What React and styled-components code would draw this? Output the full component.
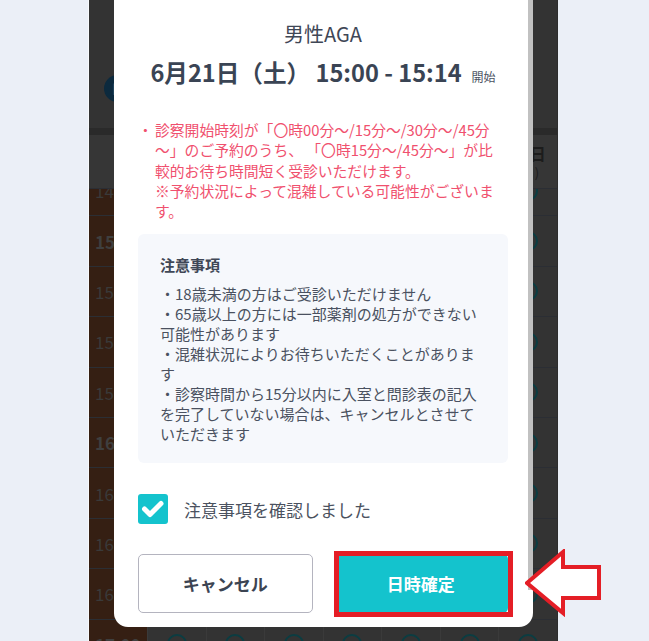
import styled, { createGlobalStyle } from 'styled-components';

const GlobalStyle = createGlobalStyle`
  html, body {
    margin: 0;
    padding: 0;
  }
  body {
    background: #ebeff7;
    font-family: "Noto Sans CJK JP", "Noto Sans", sans-serif;
    overflow: hidden;
  }
`;

const Page = styled.div`
  position: relative;
  width: 649px;
  height: 641px;
  overflow: hidden;
  background: #ebeff7;
  display: flex;
  padding-left: 88px;
  box-sizing: border-box;
`;

/* dimmed booking page behind the dialog */
const Sheet = styled.div`
  width: 470px;
  height: 641px;
  box-sizing: border-box;
  border-left: 1px solid #f7f9fc;
  border-right: 1px solid #2d2d2d;
  background: #333333;
  display: flex;
  flex-direction: column;
  overflow: hidden;
`;

const TopBar = styled.div`
  height: 128px;
  flex: none;
  box-sizing: border-box;
  padding: 75px 0 0 15px;
`;

const Badge = styled.div`
  width: 27px;
  height: 27px;
  border-radius: 50%;
  background: #0c2a3e;
  color: #34495a;
  font-size: 12px;
  font-weight: 700;
  display: flex;
  align-items: center;
  justify-content: center;
`;

const Band = styled.div`
  height: 7px;
  flex: none;
  background: #2a2a2a;
`;

const GridRow = styled.div`
  display: grid;
  grid-template-columns: 58px repeat(7, 1fr);
  flex: none;
  height: ${(p) => p.$h}px;
  box-sizing: border-box;
  border-bottom: 1px solid #2b2e34;
`;

const HeadCell = styled.div`
  display: flex;
  flex-direction: column;
  align-items: center;
  padding-top: 7px;
  color: #1c1c1c;
  background: #363636;
  border-left: 1px solid #3a3a3a;
  &:first-child {
    border-left: none;
  }
`;

const HeadDate = styled.div`
  font-size: 16px;
  font-weight: 700;
  line-height: 22px;
`;

const HeadDay = styled.div`
  font-size: 13px;
  line-height: 18px;
`;

const RowsViewport = styled.div`
  flex: 1;
  overflow: hidden;
`;

const RowsTrack = styled.div`
  margin-top: -23px;
  display: flex;
  flex-direction: column;
`;

const TimeCell = styled.div`
  background: #351f13;
  color: ${(p) => (p.$hour ? '#3f3f3f' : '#3a3a3a')};
  font-size: 17px;
  font-weight: ${(p) => (p.$hour ? 700 : 400)};
  display: flex;
  align-items: center;
  padding-left: 6px;
  white-space: nowrap;
  overflow: hidden;
`;

const SlotCell = styled.div`
  display: flex;
  align-items: center;
  justify-content: center;
  border-left: 1px solid #3a3a3a;
`;

const Ring = styled.span`
  width: 20px;
  height: 20px;
  box-sizing: border-box;
  border-radius: 50%;
  border: 2.5px solid #0b3d42;
`;

/* dialog */
const Modal = styled.div`
  position: absolute;
  left: 114px;
  top: -20px;
  width: 419px;
  box-sizing: border-box;
  padding: 40px 25px 14px 24px;
  background: #ffffff;
  border-radius: 14px;
  display: flex;
  flex-direction: column;
`;

const ScrollThumb = styled.div`
  position: absolute;
  right: 0;
  top: 20px;
  width: 5px;
  height: 590px;
  background: #c1c1c1;
`;

const Title = styled.div`
  text-align: center;
  font-size: 20px;
  line-height: 28px;
  color: #3f4756;
`;

const DateLine = styled.div`
  margin-top: 6px;
  height: 36px;
  display: flex;
  justify-content: center;
  align-items: baseline;
  font-size: 23.6px;
  line-height: 36px;
  font-weight: 700;
  color: #3a4454;
  white-space: nowrap;
`;

const Suffix = styled.span`
  margin-left: 10px;
  font-size: 12px;
  font-weight: 400;
  color: #4a5262;
`;

const Notice = styled.div`
  margin-top: 30px;
  display: flex;
  font-size: 14.8px;
  line-height: 20.25px;
  color: #f0506e;
  white-space: nowrap;
`;

const Bullet = styled.span`
  flex: none;
  width: 17px;
`;

const NoteBox = styled.div`
  margin-top: 13px;
  background: #f6f8fc;
  border-radius: 6px;
  padding: 21px 22px 19px;
`;

const NoteTitle = styled.div`
  font-size: 15px;
  line-height: 20px;
  font-weight: 700;
  color: #3f4756;
`;

const NoteList = styled.div`
  margin-top: 9px;
  font-size: 15px;
  line-height: 20px;
  color: #4a5160;
  white-space: nowrap;
`;

const CheckRow = styled.label`
  margin-top: 31px;
  display: flex;
  align-items: center;
  gap: 16px;
  height: 30px;
`;

const CheckBox = styled.span`
  width: 30px;
  height: 30px;
  border-radius: 3px;
  background: #14c3cd;
  display: flex;
  align-items: center;
  justify-content: center;
`;

const CheckLabel = styled.span`
  font-size: 17px;
  color: #4b5260;
`;

const Actions = styled.div`
  margin-top: 30px;
  display: grid;
  grid-template-columns: 1fr 1fr;
  gap: 21px;
`;

const Button = styled.button`
  height: 59px;
  width: 100%;
  border-radius: 5px;
  font-family: inherit;
  font-size: 17px;
  font-weight: 700;
  cursor: pointer;
  border: ${(p) => (p.$primary ? 'none' : '1px solid #b4b4bf')};
  background: ${(p) => (p.$primary ? '#14c3cd' : '#ffffff')};
  color: ${(p) => (p.$primary ? '#ffffff' : '#3c4452')};
`;

const ConfirmWrap = styled.div`
  position: relative;
`;

const Highlight = styled.div`
  position: absolute;
  left: 0;
  right: -5px;
  top: -3px;
  bottom: -4px;
  border: 5px solid #e41e26;
  pointer-events: none;
`;

const Arrow = styled.svg`
  position: absolute;
  left: 525px;
  top: 549px;
`;

const days = [
  ['16日', '(月)'],
  ['17日', '(火)'],
  ['18日', '(水)'],
  ['19日', '(木)'],
  ['20日', '(金)'],
  ['21日', '(土)'],
  ['22日', '(日)'],
];

const times = ['14:45', '15:00', '15:15', '15:30', '15:45', '16:00', '16:15', '16:30', '16:45', '17:00'];

const Schedule = () => (
  <Sheet>
    <TopBar>
      <Badge>目</Badge>
    </TopBar>
    <Band />
    <GridRow $h={54}>
      <HeadCell />
      {days.map(([d, w]) => (
        <HeadCell key={d}>
          <HeadDate>{d}</HeadDate>
          <HeadDay>{w}</HeadDay>
        </HeadCell>
      ))}
    </GridRow>
    <RowsViewport>
      <RowsTrack>
        {times.map((t) => (
          <GridRow key={t} $h={50.4}>
            <TimeCell $hour={t.endsWith(':00')}>{t}</TimeCell>
            {days.map(([d]) => (
              <SlotCell key={d}>
                <Ring />
              </SlotCell>
            ))}
          </GridRow>
        ))}
      </RowsTrack>
    </RowsViewport>
  </Sheet>
);

const notes = [
  ['・18歳未満の方はご受診いただけません'],
  ['・65歳以上の方には一部薬剤の処方ができない', '可能性があります'],
  ['・混雑状況によりお待ちいただくことがありま', 'す'],
  ['・診察時間から15分以内に入室と問診表の記入', 'を完了していない場合は、キャンセルとさせて', 'いただきます'],
];

const App = () => {
  return (
    <>
      <GlobalStyle />
      <Page>
        <Schedule />
        <Modal>
          <ScrollThumb />
          <Title>男性AGA</Title>
          <DateLine>
            6月21日（土） 15:00 - 15:14
            <Suffix>開始</Suffix>
          </DateLine>
          <Notice>
            <Bullet>・</Bullet>
            <div>
              診察開始時刻が「〇時00分〜/15分〜/30分〜/45分
              <br />
              〜」のご予約のうち、 「〇時15分〜/45分〜」が比
              <br />
              較的お待ち時間短く受診いただけます。
              <br />
              ※予約状況によって混雑している可能性がございま
              <br />
              す。
            </div>
          </Notice>
          <NoteBox>
            <NoteTitle>注意事項</NoteTitle>
            <NoteList>
              {notes.map((lines, i) =>
                lines.map((line, j) => <div key={`${i}-${j}`}>{line}</div>)
              )}
            </NoteList>
          </NoteBox>
          <CheckRow>
            <CheckBox>
              <svg width="30" height="30" viewBox="0 0 30 30">
                <polyline
                  points="6.5,15 12,20.5 23,9.5"
                  fill="none"
                  stroke="#ffffff"
                  strokeWidth="5"
                  strokeLinecap="round"
                  strokeLinejoin="round"
                />
              </svg>
            </CheckBox>
            <CheckLabel>注意事項を確認しました</CheckLabel>
          </CheckRow>
          <Actions>
            <Button>キャンセル</Button>
            <ConfirmWrap>
              <Button $primary>日時確定</Button>
              <Highlight />
            </ConfirmWrap>
          </Actions>
        </Modal>
        <Arrow width="78" height="68" viewBox="0 0 78 68">
          <polygon
            points="2,34 38,3 38,18 74,18 74,49 38,49 38,64"
            fill="#ffffff"
            stroke="#e41e26"
            strokeWidth="4"
            strokeLinejoin="miter"
          />
        </Arrow>
      </Page>
    </>
  );
};

export default App;
